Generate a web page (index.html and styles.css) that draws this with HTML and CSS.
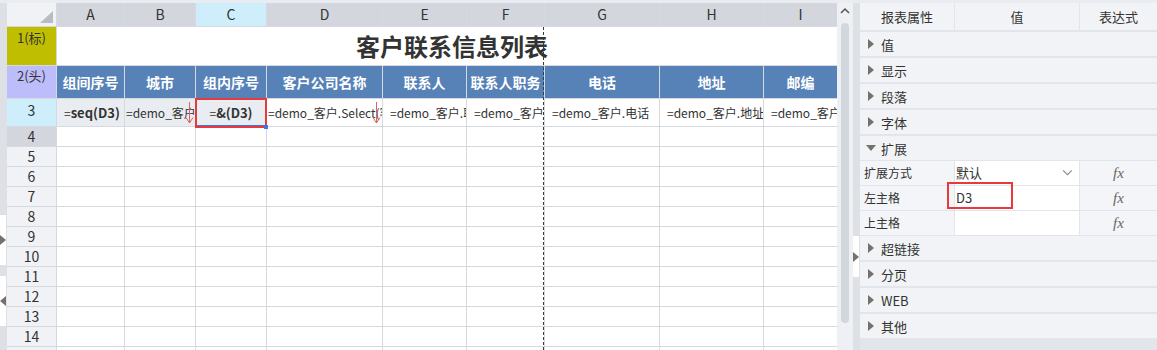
FILE: index.html
```html
<!DOCTYPE html>
<html lang="zh-CN">
<head>
    <meta charset="UTF-8">
    <title>客户联系信息列表</title>
    <link rel="stylesheet" href="styles.css">
</head>
<body>
<div class="app">
    <div class="edge">
        <div class="tab tab-top"><span class="tri-r"></span></div>
        <div class="tab tab-bottom"><span class="tri-l"></span></div>
    </div>

    <div class="sheet">
        <div class="grid">
            <div class="corner"></div>
            <div class="ch">A</div>
            <div class="ch">B</div>
            <div class="ch cur">C</div>
            <div class="ch">D</div>
            <div class="ch">E</div>
            <div class="ch">F</div>
            <div class="ch">G</div>
            <div class="ch">H</div>
            <div class="ch">I</div>

            <div class="rh title-row">1(标)</div>
            <div class="title">客户联系信息列表</div>

            <div class="rh head-row">2(头)</div>
            <div class="hd">组间序号</div>
            <div class="hd">城市</div>
            <div class="hd">组内序号</div>
            <div class="hd">客户公司名称</div>
            <div class="hd">联系人</div>
            <div class="hd">联系人职务</div>
            <div class="hd">电话</div>
            <div class="hd">地址</div>
            <div class="hd">邮编</div>

            <div class="rh cur">3</div>
            <div class="fx-cell shade">=<b>seq(D3)</b></div>
            <div class="fx-cell shade tight">=demo_客户.城市
                <svg class="expand" viewBox="0 0 9 22"><path d="M4.5 0V20.5M1 15.5L4.5 21L8 15.5"/></svg>
            </div>
            <div class="fx-cell shade center">=<b>&amp;(D3)</b><span class="pick"></span></div>
            <div class="fx-cell tight">=demo_客户.Select(客户公司名称)
                <svg class="expand" viewBox="0 0 9 22"><path d="M4.5 0V20.5M1 15.5L4.5 21L8 15.5"/></svg>
            </div>
            <div class="fx-cell">=demo_客户.联系人</div>
            <div class="fx-cell">=demo_客户.联系人职务</div>
            <div class="fx-cell">=demo_客户.电话</div>
            <div class="fx-cell">=demo_客户.地址</div>
            <div class="fx-cell">=demo_客户.邮编</div>

            <div class="rh sel">4</div><div></div><div></div><div></div><div></div><div></div><div></div><div></div><div></div><div></div>
            <div class="rh">5</div><div></div><div></div><div></div><div></div><div></div><div></div><div></div><div></div><div></div>
            <div class="rh">6</div><div></div><div></div><div></div><div></div><div></div><div></div><div></div><div></div><div></div>
            <div class="rh">7</div><div></div><div></div><div></div><div></div><div></div><div></div><div></div><div></div><div></div>
            <div class="rh">8</div><div></div><div></div><div></div><div></div><div></div><div></div><div></div><div></div><div></div>
            <div class="rh">9</div><div></div><div></div><div></div><div></div><div></div><div></div><div></div><div></div><div></div>
            <div class="rh">10</div><div></div><div></div><div></div><div></div><div></div><div></div><div></div><div></div><div></div>
            <div class="rh">11</div><div></div><div></div><div></div><div></div><div></div><div></div><div></div><div></div><div></div>
            <div class="rh">12</div><div></div><div></div><div></div><div></div><div></div><div></div><div></div><div></div><div></div>
            <div class="rh">13</div><div></div><div></div><div></div><div></div><div></div><div></div><div></div><div></div><div></div>
            <div class="rh">14</div><div></div><div></div><div></div><div></div><div></div><div></div><div></div><div></div><div></div>
            <div class="rh">15</div><div></div><div></div><div></div><div></div><div></div><div></div><div></div><div></div><div></div>
        </div>
        <div class="pagebreak"></div>
    </div>

    <div class="vscroll">
        <svg class="up" viewBox="0 0 16 14"><path d="M4 10L8 6L12 10"/></svg>
        <div class="thumb"></div>
    </div>

    <div class="split">
        <div class="tab"><span class="tri-r"></span></div>
    </div>

    <div class="panel">
        <div class="phead">
            <div>报表属性</div>
            <div>值</div>
            <div>表达式</div>
        </div>
        <div class="sec"><span class="tri-r"></span>值</div>
        <div class="sec"><span class="tri-r"></span>显示</div>
        <div class="sec"><span class="tri-r"></span>段落</div>
        <div class="sec"><span class="tri-r"></span>字体</div>
        <div class="sec open"><span class="tri-d"></span>扩展</div>
        <div class="props">
            <div class="label">扩展方式</div>
            <div class="val">默认
                <svg class="chev" viewBox="0 0 12 8"><path d="M1 1.5L6 6.5L11 1.5"/></svg>
            </div>
            <div class="fx">fx</div>

            <div class="label">左主格</div>
            <div class="val">D3<span class="mark"></span></div>
            <div class="fx">fx</div>

            <div class="label">上主格</div>
            <div class="val"></div>
            <div class="fx">fx</div>
        </div>
        <div class="sec"><span class="tri-r"></span>超链接</div>
        <div class="sec"><span class="tri-r"></span>分页</div>
        <div class="sec"><span class="tri-r"></span>WEB</div>
        <div class="sec"><span class="tri-r"></span>其他</div>
    </div>
</div>
</body>
</html>
```

FILE: styles.css
```css
* {
    box-sizing: border-box;
}

body {
    margin: 0;
    background: #e9ecf0;
    font-family: "Noto Sans CJK SC", "Noto Sans", sans-serif;
    font-size: 13px;
    color: #333333;
    overflow: hidden;
}

.app {
    display: flex;
    height: 350px;
    padding-top: 3px;
}

/* little arrow markers */
.tri-r {
    width: 0;
    height: 0;
    border-left: 6px solid #76716b;
    border-top: 5px solid transparent;
    border-bottom: 5px solid transparent;
}

.tri-l {
    width: 0;
    height: 0;
    border-right: 6px solid #76716b;
    border-top: 5px solid transparent;
    border-bottom: 5px solid transparent;
}

.tri-d {
    width: 0;
    height: 0;
    border-top: 6px solid #76716b;
    border-left: 5px solid transparent;
    border-right: 5px solid transparent;
}

.edge {
    width: 7px;
    background: #dde1e6;
    display: flex;
    flex-direction: column;
}

.edge .tab {
    width: 6px;
    height: 50px;
    background: #ffffff;
    display: flex;
    align-items: center;
}

.edge .tab-top {
    margin-top: 212px;
}

.edge .tab-bottom {
    margin-top: 11px;
}

/* spreadsheet */
.sheet {
    width: 830px;
    position: relative;
    overflow: hidden;
    background: #ffffff;
}

.grid {
    display: grid;
    grid-template-columns: 49px 67px 70px 70px 115px 83px 77px 114px 103px 73px;
    grid-template-rows: 23px 38px 32px 27px repeat(12, 19px);
    gap: 1px;
    background: #d5d9e0;
}

.grid > div {
    background: #ffffff;
    overflow: hidden;
    white-space: nowrap;
}

.corner {
    position: relative;
}

.grid .corner {
    background: #f0f2f5;
}

.corner::after {
    content: "";
    position: absolute;
    right: 3px;
    bottom: 3px;
    width: 13px;
    height: 12px;
    background: #b9bdc3;
    clip-path: polygon(100% 0, 100% 100%, 0 100%);
}

.grid .ch {
    background: #d3d7dd;
    text-align: center;
    line-height: 23px;
    font-size: 14px;
}

.grid .ch.cur {
    background: #cdeefa;
}

.grid .rh {
    background: #f0f2f5;
    text-align: center;
    font-size: 14px;
    line-height: 19px;
}

.grid .rh.title-row {
    background: #bfbe00;
    font-size: 13px;
    line-height: 22px;
}

.grid .rh.head-row {
    background: #bdbdfb;
    font-size: 13px;
    line-height: 20px;
}

.grid .rh.cur {
    background: #cdeefa;
    padding-top: 2px;
}

.grid .rh.sel {
    background: #d3d7dd;
}

.title {
    grid-column: span 9;
    font-size: 24px;
    font-weight: bold;
    text-align: center;
    line-height: 38px;
    color: #333333;
    padding-left: 10px;
}

.grid .hd {
    background: #5682b7;
    color: #ffffff;
    font-weight: bold;
    font-size: 14px;
    text-align: center;
    line-height: 32px;
}

.fx-cell {
    position: relative;
    font-size: 12px;
    line-height: 27px;
    padding-left: 7px;
}

.grid .fx-cell.shade {
    background: #e9edf1;
}

.fx-cell b {
    font-size: 13px;
}

.fx-cell.tight {
    padding-left: 1px;
}

.grid .fx-cell.center {
    text-align: center;
    padding-left: 0;
    overflow: visible;
    z-index: 2;
}

.expand {
    position: absolute;
    right: 1px;
    top: 3px;
    width: 9px;
    height: 22px;
    fill: none;
    stroke: #e06060;
    stroke-width: 1;
}

.pick {
    position: absolute;
    top: -1px;
    left: -1px;
    right: -1px;
    bottom: -2px;
    border: 2px solid #e8393c;
}

.pick::before {
    content: "";
    position: absolute;
    left: 0;
    right: 0;
    bottom: 0;
    height: 1px;
    background: #3b78e7;
}

.pick::after {
    content: "";
    position: absolute;
    right: -3px;
    bottom: -3px;
    width: 4px;
    height: 4px;
    background: #3b78e7;
}

.pagebreak {
    position: absolute;
    left: 536px;
    top: 24px;
    bottom: 0;
    border-left: 1px dashed #3a3a3a;
}

.vscroll {
    width: 16px;
    background: #eef0f4;
    display: flex;
    flex-direction: column;
    align-items: center;
}

.vscroll .up {
    width: 16px;
    height: 14px;
    fill: none;
    stroke: #555555;
    stroke-width: 1.5;
}

.thumb {
    margin-top: 6px;
    width: 8px;
    height: 300px;
    border-radius: 4px;
    background: #d2d6dd;
}

.split {
    width: 7px;
    background: #dde1e6;
}

.split .tab {
    margin-top: 233px;
    width: 6px;
    height: 41px;
    background: #ffffff;
    display: flex;
    align-items: center;
}

/* property panel */
.panel {
    flex: 1;
    background: #e2e5ea;
    display: flex;
    flex-direction: column;
}

.phead {
    display: grid;
    grid-template-columns: 94px 124px 1fr;
    gap: 1px;
    height: 27px;
    margin-bottom: 2px;
}

.phead div {
    background: #f2f3f6;
    text-align: center;
    line-height: 27px;
}

.sec {
    height: 24px;
    flex-shrink: 0;
    background: #f2f3f6;
    margin-bottom: 2px;
    display: flex;
    align-items: center;
    gap: 7px;
    padding-left: 8px;
}

.sec.open {
    margin-bottom: 0;
    padding-left: 6px;
    gap: 5px;
}

.props {
    display: grid;
    grid-template-columns: 94px 124px 1fr;
    grid-auto-rows: 24px;
    gap: 1px;
    padding: 1px 0;
}

.props > div {
    background: #f4f5f8;
    line-height: 24px;
}

.props .label {
    font-size: 12px;
    padding-left: 4px;
}

.props .val {
    position: relative;
    background: #ffffff;
    padding-left: 1px;
}

.chev {
    position: absolute;
    right: 6px;
    top: 8px;
    width: 11px;
    height: 7px;
    fill: none;
    stroke: #888888;
    stroke-width: 1.2;
}

.mark {
    position: absolute;
    left: -8px;
    top: -4px;
    width: 66px;
    height: 27px;
    border: 2px solid #e8393c;
}

.props .fx {
    text-align: center;
    font-family: "Liberation Serif", serif;
    font-style: italic;
    font-size: 15px;
    color: #666666;
}
```
